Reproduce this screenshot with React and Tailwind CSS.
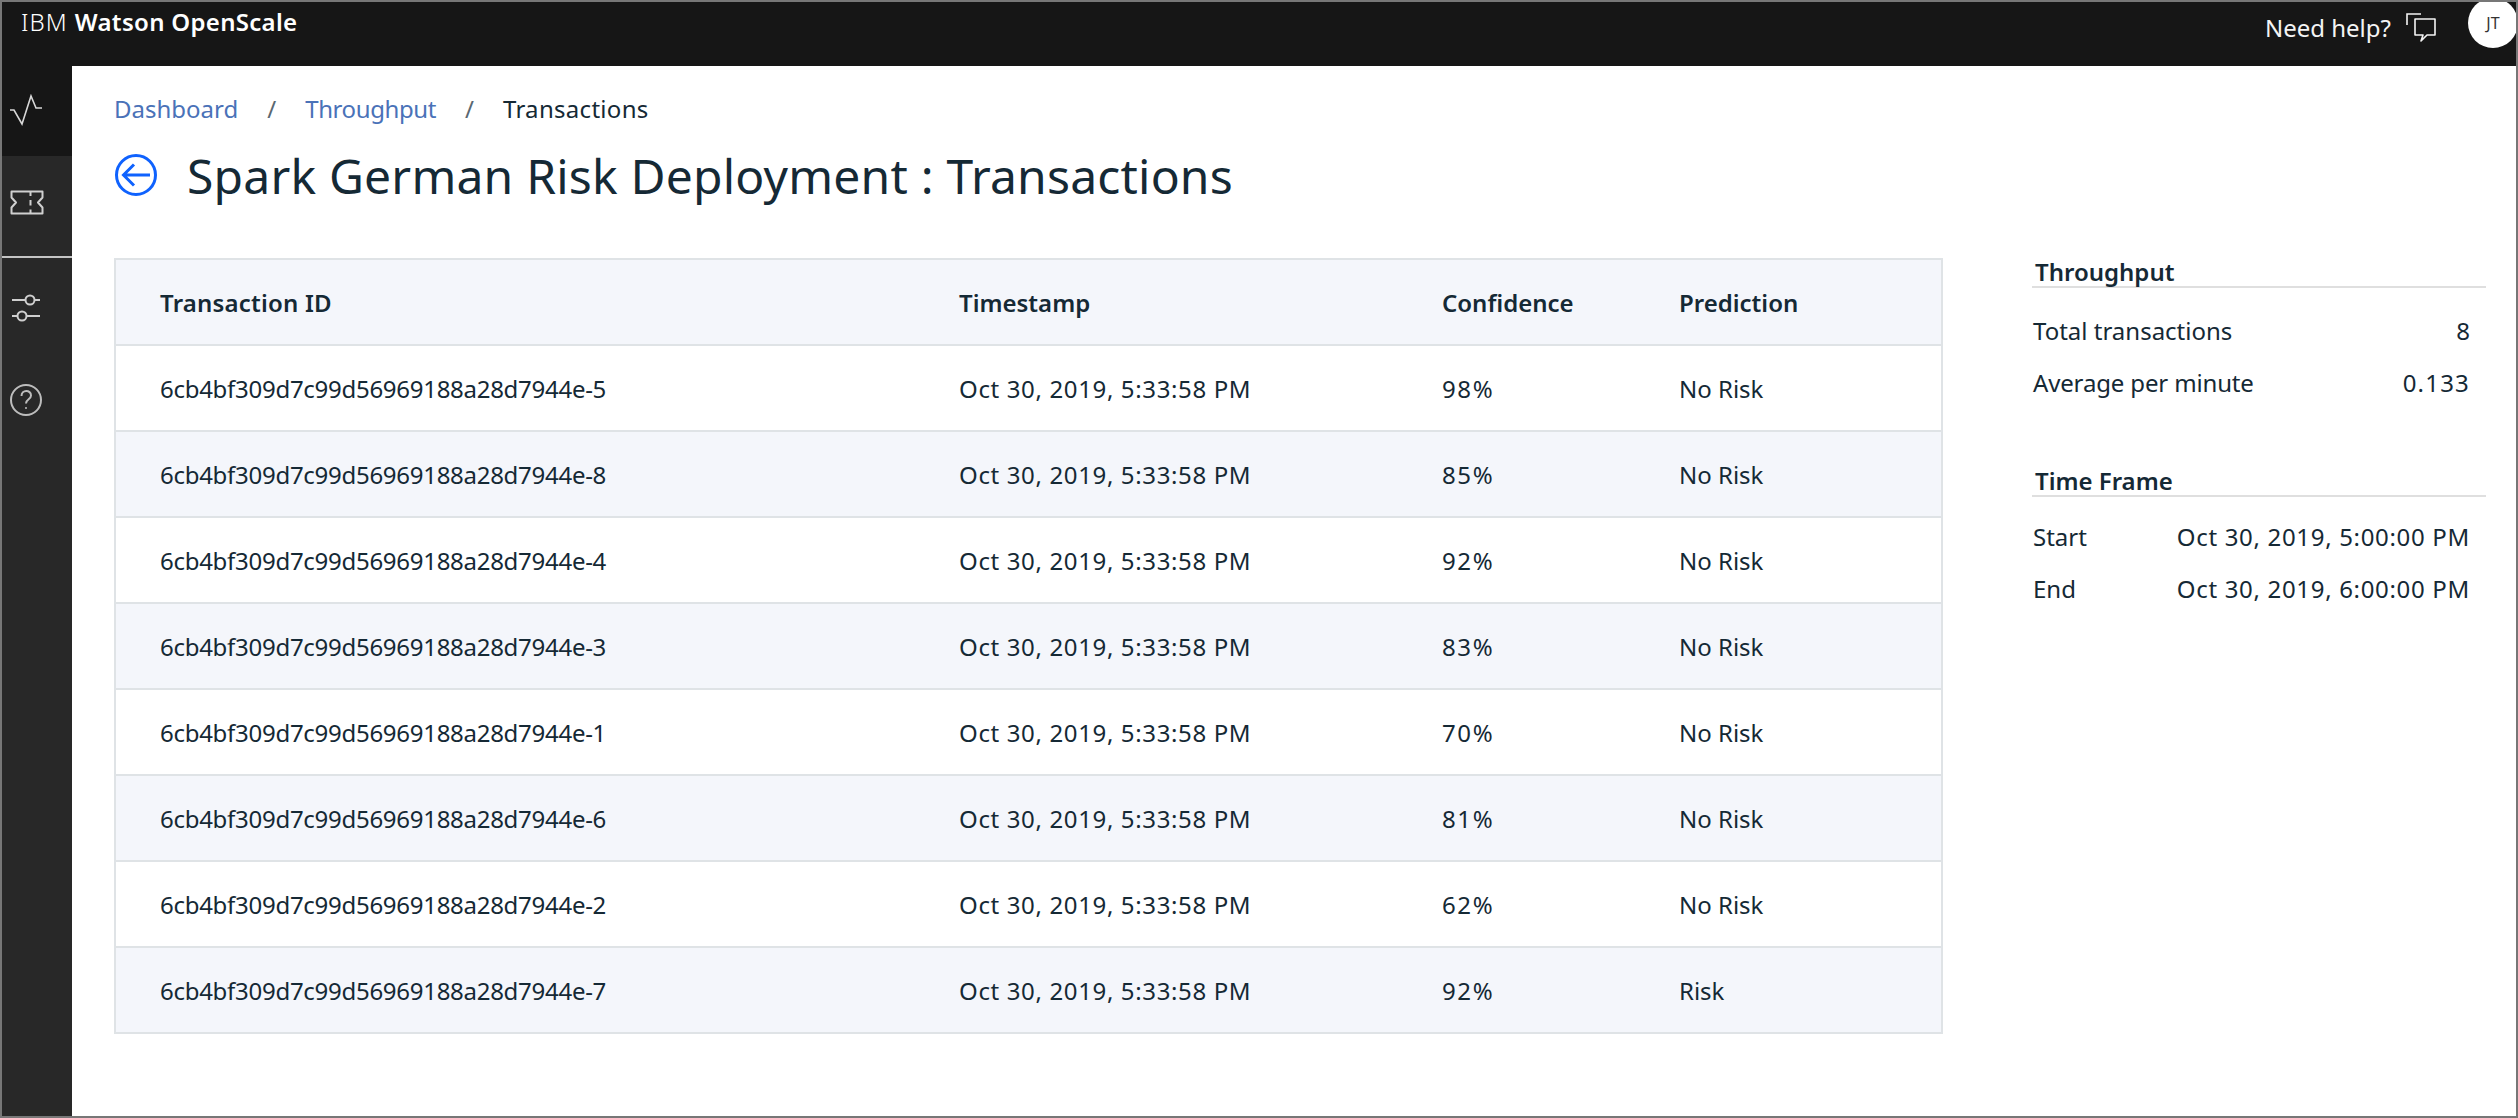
const ROWS = [
  ["6cb4bf309d7c99d56969188a28d7944e-5", "98%", "No Risk"],
  ["6cb4bf309d7c99d56969188a28d7944e-8", "85%", "No Risk"],
  ["6cb4bf309d7c99d56969188a28d7944e-4", "92%", "No Risk"],
  ["6cb4bf309d7c99d56969188a28d7944e-3", "83%", "No Risk"],
  ["6cb4bf309d7c99d56969188a28d7944e-1", "70%", "No Risk"],
  ["6cb4bf309d7c99d56969188a28d7944e-6", "81%", "No Risk"],
  ["6cb4bf309d7c99d56969188a28d7944e-2", "62%", "No Risk"],
  ["6cb4bf309d7c99d56969188a28d7944e-7", "92%", "Risk"],
];

const COLS = "grid grid-cols-[799px_483px_237px_1fr] items-center pt-[2px]";

function Pulse() {
  return (
    <svg width="34" height="32" viewBox="0 0 34 32" fill="none" stroke="#d8d8d8" strokeWidth="1.6">
      <path d="M0 16 H4 L12 30 L21 2 L26 14 H32" />
    </svg>
  );
}
function Ticket() {
  return (
    <svg width="34" height="25" viewBox="0 0 34 25" fill="none" stroke="#d0d0d0" strokeWidth="2">
      <path d="M1.5 1.5 H32.5 V7.5 L28 12.5 L32.5 17.5 V23.5 H1.5 V17.5 L6 12.5 L1.5 7.5 Z" strokeLinejoin="round" />
      <path d="M20.5 1.5 V6 M20.5 10 V15.5 M20.5 19.5 V23.5" />
    </svg>
  );
}
function Sliders() {
  return (
    <svg width="30" height="32" viewBox="0 0 30 32" fill="none" stroke="#cfcfcf" strokeWidth="2">
      <path d="M1 8 H14 M24 8 H29 M1 24 H6 M16 24 H29" />
      <circle cx="19" cy="8" r="4.5" />
      <circle cx="11" cy="24" r="4.5" />
    </svg>
  );
}
function Help() {
  return (
    <svg width="34" height="34" viewBox="0 0 34 34" fill="none" stroke="#bdbdbd" strokeWidth="2">
      <circle cx="17" cy="17" r="15" />
      <path d="M12.5 13 C12.5 6.5 22 6.5 22 12.5 C22 16.5 17 16 17 20.5" />
      <circle cx="17" cy="25" r="1" fill="#bdbdbd" stroke="none" />
    </svg>
  );
}
function Chat() {
  return (
    <svg width="30" height="29" viewBox="0 0 30 29" fill="none" stroke="#f4f4f4" strokeWidth="1.6">
      <path d="M1 12 V1 H15" />
      <path d="M9 6 H29 V22 H21 L15 28 L17 22 H9 Z" strokeLinejoin="round" />
    </svg>
  );
}
function Back() {
  return (
    <svg className="mt-[2px] shrink-0" width="44" height="42" viewBox="0 0 44 42" fill="none" stroke="#0f62fe" strokeWidth="3">
      <circle cx="22" cy="21" r="19.5" />
      <path d="M36 21 H10 M20 10.5 L9.5 21 L20 31.5" />
    </svg>
  );
}

function Stat({ label, value, labelClass, valueClass }) {
  return (
    <div className="flex h-[52px] items-center justify-between pr-[16px] pl-px">
      <span className={labelClass}>{label}</span>
      <span className={valueClass}>{value}</span>
    </div>
  );
}

export default function App() {
  return (
    <div
      className="box-border flex h-[1118px] w-[2518px] flex-col overflow-hidden border-2 border-[#777777] bg-white text-[24px] text-[#152935]"
      style={{ fontFamily: '"Noto Sans", sans-serif' }}
    >
      <header className="flex h-[64px] shrink-0 justify-between overflow-hidden bg-[#161616] text-white">
        <div className="pt-[3px] pl-[19px] text-[24px] leading-[34px] tracking-[0.3px]">
          <span className="font-light tracking-[1px]">IBM </span>
          <span className="font-semibold">Watson OpenScale</span>
        </div>
        <div className="flex items-start">
          <span className="pt-[8px] text-[24px] leading-[36px] text-[#f4f4f4]">Need help?</span>
          <span className="mt-[11px] ml-[15px]"><Chat /></span>
          <span className="mt-[-4px] mr-[-2px] ml-[32px] flex h-[50px] w-[50px] items-center justify-center rounded-full bg-white text-[16px] text-[#333333]">JT</span>
        </div>
      </header>

      <div className="flex min-h-0 flex-1">
        <nav className="flex w-[70px] shrink-0 flex-col bg-[#282828]">
          <div className="h-[90px] bg-[#161616] pt-[28px] pl-[8px]"><Pulse /></div>
          <div className="h-[100px] pt-[34px] pl-[8px]"><Ticket /></div>
          <div className="h-[2px] bg-[#c4c4c4]" />
          <div className="pt-[34px] pl-[9px]"><Sliders /></div>
          <div className="pt-[59px] pl-[7px]"><Help /></div>
        </nav>

        <main className="min-w-0 flex-1 pl-[42px]">
          <div className="flex h-[86px] items-center text-[24px] leading-none">
            <span className="text-[#4a72b8]">Dashboard</span>
            <span className="ml-[29px] text-[#5a6872]">/</span>
            <span className="ml-[29px] tracking-[-0.4px] text-[#4a72b8]">Throughput</span>
            <span className="ml-[29px] text-[#5a6872]">/</span>
            <span className="ml-[29px] tracking-[0.3px] text-[#152935]">Transactions</span>
          </div>
          <div className="flex h-[64px] items-start">
            <Back />
            <h1 className="ml-[29px] text-[48px] leading-[48px] font-normal tracking-[0.2px] whitespace-nowrap">Spark German Risk Deployment : Transactions</h1>
          </div>

          <div className="mt-[42px] flex items-start">
            <div className="w-[1829px] shrink-0 border-2 border-[#dfe3e6]">
              <div className={`${COLS} h-[84px] bg-[#f4f6fb] font-semibold`}>
                <div className="pl-[44px] tracking-[0.2px]">Transaction ID</div>
                <div className="pl-[44px]">Timestamp</div>
                <div className="pl-[44px]">Confidence</div>
                <div className="pl-[44px]">Prediction</div>
              </div>
              {ROWS.map(([id, conf, pred], i) => (
                <div
                  key={id}
                  className={`${COLS} h-[86px] border-t-2 border-[#dfe3e6] ${i % 2 ? "bg-[#f4f6fb]" : "bg-white"}`}
                >
                  <div className="pl-[44px] tracking-[-0.28px]">{id}</div>
                  <div className="pl-[44px] tracking-[0.64px]">Oct 30, 2019, 5:33:58 PM</div>
                  <div className="pl-[44px] tracking-[1.6px]">{conf}</div>
                  <div className="pl-[44px]">{pred}</div>
                </div>
              ))}
            </div>

            <aside className="ml-[89px] w-[454px] shrink-0">
              <h2 className="border-b-2 border-[#dfdfdf] pl-[3px] text-[24px] leading-[28px] font-semibold">Throughput</h2>
              <div className="pt-[17px]">
                <Stat label="Total transactions" value="8" />
                <Stat label="Average per minute" labelClass="tracking-[-0.15px]" value="0.133" valueClass="tracking-[1.2px]" />
              </div>
              <h2 className="mt-[58px] border-b-2 border-[#dfdfdf] pl-[3px] text-[24px] leading-[28px] font-semibold">Time Frame</h2>
              <div className="pt-[14px]">
                <Stat label="Start" value="Oct 30, 2019, 5:00:00 PM" valueClass="tracking-[0.68px]" />
                <Stat label="End" value="Oct 30, 2019, 6:00:00 PM" valueClass="tracking-[0.68px]" />
              </div>
            </aside>
          </div>
        </main>
      </div>
    </div>
  );
}
